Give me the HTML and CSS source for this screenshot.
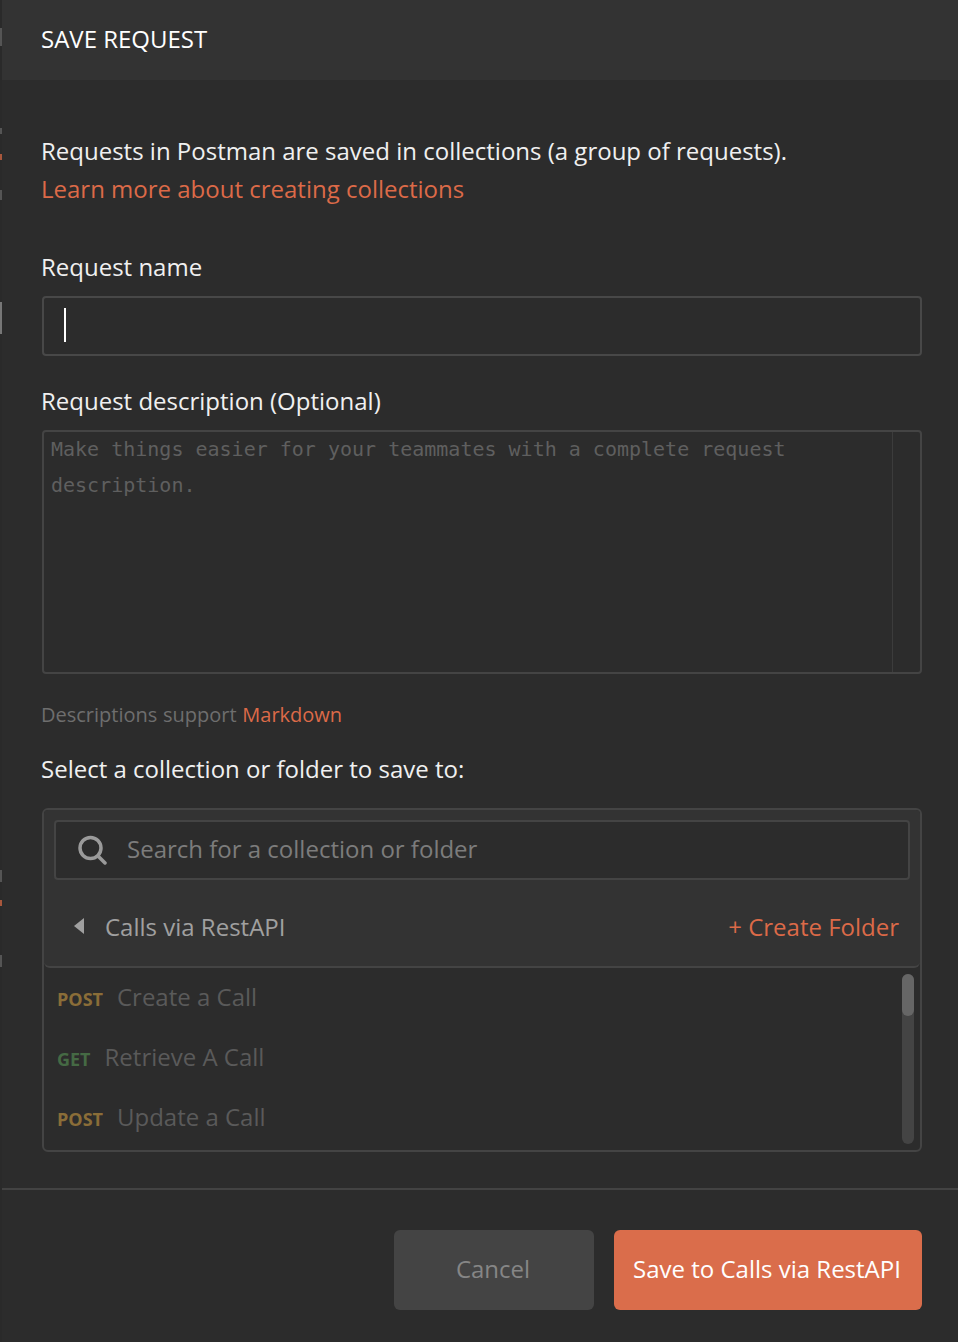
FILE: index.html
```html
<!DOCTYPE html>
<html lang="en">
<head>
    <meta charset="UTF-8">
    <meta name="viewport" content="width=device-width, initial-scale=1.0">
    <title>Save Request</title>
    <link rel="stylesheet" href="styles.css">
</head>
<body>
    <!-- Sliver of the app behind the modal -->
    <div class="backdrop-edge"></div>

    <div class="modal">
        <div class="modal-header">SAVE REQUEST</div>

        <div class="modal-body">
            <p class="intro">Requests in Postman are saved in collections (a group of requests).<br>
                <a href="#">Learn more about creating collections</a></p>

            <div class="label label-name">Request name</div>
            <div class="field"><span class="caret"></span></div>

            <div class="label label-desc">Request description (Optional)</div>
            <div class="textarea">
                <div class="textarea-text">Make things easier for your teammates with a complete request description.</div>
                <div class="textarea-gutter"></div>
            </div>
            <div class="hint">Descriptions support <a href="#">Markdown</a></div>

            <div class="label label-select">Select a collection or folder to save to:</div>
            <div class="picker">
                <div class="picker-head">
                    <div class="search">
                        <svg class="search-icon" width="30" height="30" viewBox="0 0 30 30" fill="none" stroke="#9a9a9a" stroke-width="3.5">
                            <circle cx="13.5" cy="13" r="10.5"/>
                            <path d="M21 21l7 7" stroke-linecap="round"/>
                        </svg>
                        <span>Search for a collection or folder</span>
                    </div>
                    <div class="collection">
                        <span class="back-arrow"></span>
                        <span class="collection-name">Calls via RestAPI</span>
                        <a class="create-folder" href="#">+ Create Folder</a>
                    </div>
                </div>
                <div class="request-list">
                    <div class="request"><span class="method post">POST</span>Create a Call</div>
                    <div class="request"><span class="method get">GET</span>Retrieve A Call</div>
                    <div class="request"><span class="method post">POST</span>Update a Call</div>
                    <div class="scrollbar"><div class="scrollbar-thumb"></div></div>
                </div>
            </div>
        </div>

        <div class="modal-footer">
            <button class="btn btn-cancel">Cancel</button>
            <button class="btn btn-save">Save to Calls via RestAPI</button>
        </div>
    </div>
</body>
</html>
```

FILE: styles.css
```css
* {
    margin: 0;
    padding: 0;
    box-sizing: border-box;
}

body {
    font-family: "Open Sans", Arial, sans-serif;
    background-color: #2c2c2c;
    color: #f0f0f0;
    display: flex;
    width: 958px;
    height: 1342px;
    overflow: hidden;
    font-size: 24px;
}

a {
    color: #dc6a48;
    text-decoration: none;
}

.backdrop-edge {
    width: 2px;
    flex-shrink: 0;
    background:
        linear-gradient(#555, #555) 0 28px / 2px 18px no-repeat,
        linear-gradient(#555, #555) 0 128px / 2px 6px no-repeat,
        linear-gradient(#a8573c, #a8573c) 0 154px / 2px 6px no-repeat,
        linear-gradient(#555, #555) 0 190px / 2px 10px no-repeat,
        linear-gradient(#777, #777) 0 302px / 2px 32px no-repeat,
        linear-gradient(#555, #555) 0 870px / 2px 12px no-repeat,
        linear-gradient(#a8573c, #a8573c) 0 900px / 2px 6px no-repeat,
        linear-gradient(#555, #555) 0 955px / 2px 12px no-repeat,
        #2a2a2a;
}

.modal {
    flex: 1;
    display: flex;
    flex-direction: column;
}

.modal-header {
    height: 80px;
    flex-shrink: 0;
    background-color: #333333;
    padding: 0 39px 4px;
    display: flex;
    align-items: center;
    color: #ffffff;
}

.modal-body {
    padding: 52px 36px 0 39px;
    flex: 1;
}

.intro {
    line-height: 38px;
}

.label {
    line-height: 32px;
}

.label-name {
    margin-top: 43px;
}

.label-desc {
    margin-top: 29px;
}

.label-select {
    margin-top: 22px;
}

.field {
    margin: 13px 0 0 1px;
    height: 60px;
    border: 2px solid #484848;
    border-radius: 4px;
    padding: 10px 20px;
}

.caret {
    display: block;
    width: 2px;
    height: 34px;
    background-color: #ffffff;
}

.textarea {
    margin: 13px 0 0 1px;
    height: 244px;
    border: 2px solid #444444;
    border-radius: 4px;
    display: flex;
}

.textarea-text {
    flex: 1;
    margin-top: -1px;
    padding: 0 7px;
    font-family: "DejaVu Sans Mono", "Liberation Mono", monospace;
    font-size: 20px;
    line-height: 36px;
    color: #5f5f5f;
}

.textarea-gutter {
    width: 28px;
    border-left: 1px solid #3c3c3c;
}

.hint {
    margin-top: 25px;
    font-size: 20px;
    word-spacing: 0.5px;
    line-height: 32px;
    color: #6e6e6e;
}

.picker {
    margin: 23px 0 0 1px;
    height: 344px;
    border: 2px solid #444444;
    border-radius: 6px;
    display: flex;
    flex-direction: column;
    overflow: hidden;
}

.picker-head {
    height: 158px;
    flex-shrink: 0;
    background-color: #333333;
    border-bottom: 2px solid #444444;
    border-radius: 0 0 6px 6px;
    padding: 10px 10px 0;
}

.search {
    height: 60px;
    background-color: #2c2c2c;
    border: 2px solid #444444;
    border-radius: 4px;
    display: flex;
    align-items: center;
    padding: 0 0 4px 21px;
    color: #7c7c7c;
}

.search-icon {
    margin: 4px 20px 0 0;
}

.collection {
    height: 86px;
    display: flex;
    align-items: center;
    padding: 6px 0 0 20px;
    color: #a0a0a0;
}

.back-arrow {
    width: 0;
    height: 0;
    border-top: 8px solid transparent;
    border-bottom: 8px solid transparent;
    border-right: 10px solid #a0a0a0;
    margin-right: 21px;
}

.collection-name {
    flex: 1;
}

.create-folder {
    margin-right: 11px;
}

.request-list {
    position: relative;
    flex: 1;
    color: #5a5a5a;
}

.request {
    height: 60px;
    display: flex;
    align-items: center;
    padding: 0 0 4px 13px;
}

.method {
    font-size: 18px;
    font-weight: 700;
    margin-right: 14px;
    margin-top: 6px;
}

.post {
    color: #8a6d38;
}

.get {
    color: #456a44;
}

.scrollbar {
    position: absolute;
    top: 6px;
    right: 6px;
    bottom: 6px;
    width: 12px;
    border-radius: 6px;
    background-color: #444444;
}

.scrollbar-thumb {
    height: 42px;
    border-radius: 6px;
    background-color: #666666;
}

.modal-footer {
    height: 154px;
    flex-shrink: 0;
    border-top: 2px solid #434343;
    padding: 40px 36px 0 0;
    display: flex;
    justify-content: flex-end;
    gap: 20px;
}

.btn {
    height: 80px;
    border: none;
    border-radius: 6px;
    font-family: inherit;
    font-size: 24px;
    padding: 0 2px 4px 0;
    cursor: pointer;
}

.btn-cancel {
    width: 200px;
    background-color: #444444;
    color: #868686;
}

.btn-save {
    width: 308px;
    background-color: #da6d4b;
    color: #ffffff;
}
```
